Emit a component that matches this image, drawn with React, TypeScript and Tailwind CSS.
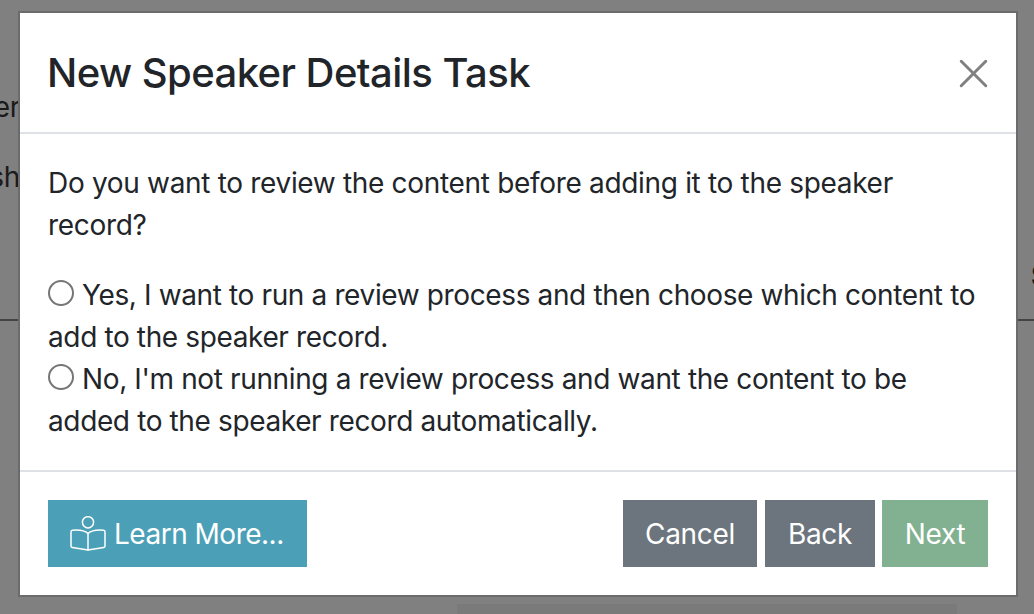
import { X } from "lucide-react";

function BookReader() {
    return (
        <svg width="36" height="36" viewBox="0 0 36 36" fill="none" stroke="currentColor" strokeWidth="1.5" strokeLinejoin="round" strokeLinecap="round" className="shrink-0">
            <circle cx="18" cy="6.3" r="5.6" />
            <path d="M18 17.5C15 15 9 13.6 2.5 14.3 1.6 14.4 1 15 1 15.9V30c0 .8.5 1.3 1.3 1.4L18 34l15.7-2.6c.8-.1 1.3-.6 1.3-1.4V15.9c0-.9-.6-1.5-1.5-1.6C27 13.6 21 15 18 17.5z" />
            <path d="M18 17.5V34" />
        </svg>
    );
}

function Option({ children }: { children: React.ReactNode }) {
    return (
        <label className="block tracking-[-0.37px]">
            <span className="inline-block w-[26px] h-[26px] rounded-full border-2 border-[#767676] bg-white align-[-1px] mr-[8px]" />
            {children}
        </label>
    );
}

export default function App() {
    return (
        <div className="relative h-[614px] w-[1034px] overflow-hidden bg-[#808080] text-[28px] leading-[42px] tracking-[-0.32px] text-[#212529]" style={{ fontFamily: "Inter, sans-serif" }}>
            {/* page behind the backdrop */}
            <div className="h-[321px] border-b-2 border-[#444444] pt-[86px] text-[#1a1a1a]">
                <p className="w-[20px] flex justify-end whitespace-nowrap">Speaker</p>
                <p className="mt-[28px] w-[20px] flex justify-end whitespace-nowrap">Publish</p>
                <p className="mt-[57px] ml-[1031px] whitespace-nowrap font-bold">Status</p>
            </div>
            <div className="mx-[457px] mt-[283px] h-[20px] w-[500px] bg-[#7a7a7a]" />

            {/* modal */}
            <div className="absolute left-[18px] top-[11px] w-[1000px] h-[586px] border-2 border-[#6b6b6b] bg-white flex flex-col">
                <div className="h-[121px] shrink-0 border-b-2 border-[#dee2e6] px-[28px] pt-[1px] flex items-center justify-between">
                    <h5 className="-ml-[1px] text-[40px] leading-[60px] font-medium tracking-[-0.55px]">New Speaker Details Task</h5>
                    <X className="w-[49px] h-[49px] text-[#808080] -mr-[10px]" strokeWidth={1.47} />
                </div>
                <div className="p-[28px] flex-1">
                    <p className="mb-[28px]">Do you want to review the content before adding it to the speaker record?</p>
                    <Option>Yes, I want to run a review process and then choose which content to add to the speaker record.</Option>
                    <Option>No, I'm not running a review process and want the content to be added to the speaker record automatically.</Option>
                </div>
                <div className="h-[125px] shrink-0 border-t-2 border-[#dee2e6] px-[28px] pt-[28px] flex items-start">
                    <button className="h-[67px] w-[259px] pl-[22px] bg-[#4ba0b7] text-white tracking-[-0.5px] flex items-center gap-[8px]">
                        <BookReader />
                        Learn More...
                    </button>
                    <div className="ml-auto flex">
                        <button className="h-[67px] w-[134px] bg-[#6c757d] text-white">Cancel</button>
                        <button className="h-[67px] w-[110px] ml-[8px] bg-[#6c757d] text-white">Back</button>
                        <button className="h-[67px] w-[106px] ml-[7px] bg-[#82b191] text-white">Next</button>
                    </div>
                </div>
            </div>
        </div>
    );
}
